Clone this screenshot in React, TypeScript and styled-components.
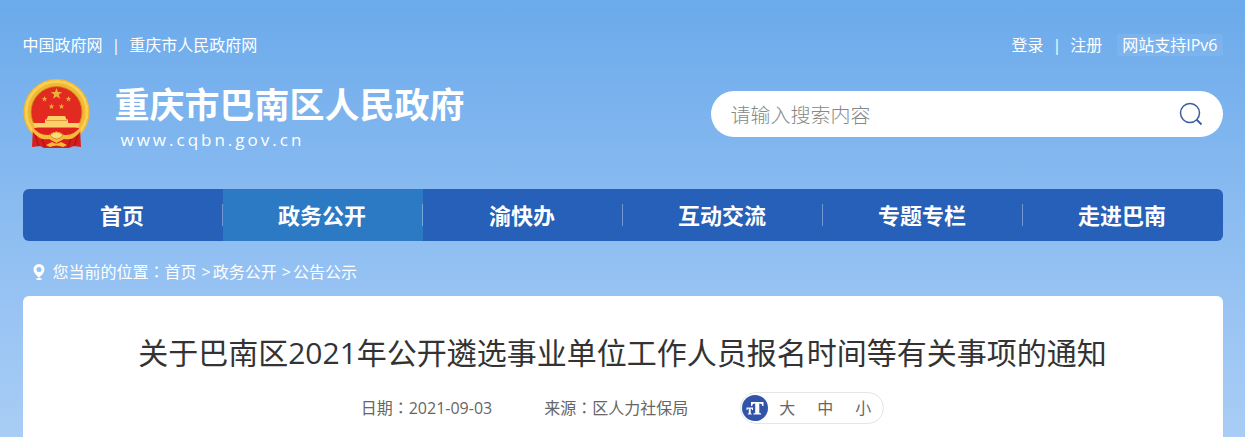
import React from 'react';
import styled, { createGlobalStyle } from 'styled-components';

const sans = `'Open Sans', 'Noto Sans CJK SC', sans-serif`;

const GlobalStyle = createGlobalStyle`
  *, *::before, *::after { box-sizing: border-box; }
  body {
    margin: 0;
    font-family: ${sans};
    font-size: 16px;
    line-height: 24px;
    color: #fff;
  }
  a { color: inherit; text-decoration: none; }
  h1, p, ul, ol { margin: 0; padding: 0; list-style: none; }
  button, input { font: inherit; }
`;

const Page = styled.div`
  display: flex;
  flex-direction: column;
  min-height: 100vh;
  background: linear-gradient(#6baaeb 0px, #92c0f2 260px, #a9cdf5 437px);
`;

const Container = styled.div`
  width: calc(100% - 44px);
  max-width: 1200px;
  margin: 0 auto;
`;

const TopBar = styled(Container)`
  display: flex;
  justify-content: space-between;
  padding-top: 33px;
`;

const LinkGroup = styled.div`
  display: flex;
  align-items: center;
`;

const Divider = styled.span`
  margin: 0 9px;
`;

const Badge = styled.a`
  margin-left: 15px;
  padding: 0 5px;
  line-height: 22px;
  border-radius: 2px;
  background: rgba(255, 255, 255, 0.07);
`;

const Header = styled(Container)`
  display: flex;
  align-items: center;
  justify-content: space-between;
  padding: 20px 0 38px;
`;

const Brand = styled.a`
  display: flex;
  align-items: center;
  gap: 25px;
`;

const BrandText = styled.div`
  display: flex;
  flex-direction: column;
  padding: 3px 0 1px;
`;

const BrandName = styled.span`
  font-size: 35px;
  font-weight: 700;
  line-height: 50px;
`;

const BrandUrl = styled.span`
  padding-left: 6px;
  font-size: 17px;
  line-height: 20px;
  letter-spacing: 3px;
`;

const Search = styled.form`
  display: flex;
  align-items: center;
  width: 512px;
  height: 46px;
  padding: 0 20px;
  border-radius: 23px;
  background: #fff;
`;

const SearchInput = styled.input`
  flex: 1;
  min-width: 0;
  padding: 3px 0 0;
  border: 0;
  outline: 0;
  background: transparent;
  font-size: 20px;
  line-height: 30px;
  font-weight: 300;
  color: #333;
  &::placeholder { color: #888; opacity: 1; }
`;

const SearchButton = styled.button`
  display: flex;
  padding: 0;
  border: 0;
  background: none;
  cursor: pointer;
`;

const Nav = styled(Container).attrs({ as: 'nav' })`
  display: flex;
  overflow: hidden;
  border-radius: 6px;
  background: #2660b8;
`;

const NavItem = styled.a<{ $active?: boolean }>`
  display: flex;
  flex: 1;
  align-items: center;
  height: 52px;
  background: ${(p) => (p.$active ? '#2c79c4' : 'transparent')};
  font-size: 22px;
  font-weight: 700;
  line-height: 22px;
`;

const NavLabel = styled.span`
  flex: 1;
  text-align: center;
  border-right: 1px solid rgba(255, 255, 255, 0.35);
  ${NavItem}:last-child & { border-color: transparent; }
`;

const Breadcrumb = styled(Container)`
  display: flex;
  align-items: center;
  padding: 18px 0 12px 10px;
`;

const PinSlot = styled.span`
  display: flex;
  margin-right: 8px;
`;

const Colon = styled.span.attrs({ lang: 'zh-Hant', children: '：' })`
  font-family: 'Noto Sans CJK TC', sans-serif;
`;

const Arrow = styled.span`
  margin: 0 2px 0 5px;
`;

const Article = styled(Container).attrs({ as: 'main' })`
  flex: 1;
  padding: 34px 20px 13px;
  border-radius: 6px 6px 0 0;
  background: #fff;
  color: #666;
`;

const Title = styled.h1`
  font-size: 30px;
  font-weight: 400;
  line-height: 46px;
  text-align: center;
  color: #333;
`;

const Meta = styled.div`
  display: flex;
  align-items: center;
  justify-content: center;
  gap: 52px;
  margin-top: 16px;
`;

const MetaItem = styled.span`
  padding-bottom: 2px;
  line-height: 22px;
`;

const SizePicker = styled.div`
  display: flex;
  align-items: center;
  height: 32px;
  padding: 0 12px 0 1px;
  border: 1px solid #e2e5ea;
  border-radius: 16px;
`;

const SizeButtons = styled.div`
  display: flex;
  gap: 22px;
  margin-left: 11px;
`;

const SizeButton = styled.button`
  padding: 0;
  border: 0;
  background: none;
  color: #666;
  cursor: pointer;
`;

const star = (cx: number, cy: number, r: number) =>
  Array.from({ length: 10 }, (_, i) => {
    const a = (Math.PI / 5) * i - Math.PI / 2;
    const k = i % 2 ? r * 0.4 : r;
    return `${(cx + k * Math.cos(a)).toFixed(2)},${(cy + k * Math.sin(a)).toFixed(2)}`;
  }).join(' ');

const Emblem = () => (
  <svg width="67" height="70" viewBox="0 0 67 70" aria-hidden="true">
    <circle cx="33.5" cy="33" r="29" fill="none" stroke="#f1b832" strokeWidth="8" />
    <circle cx="33.5" cy="33" r="30.5" fill="none" stroke="#f9cf58" strokeWidth="3" />
    <circle cx="33.5" cy="33" r="32" fill="none" stroke="#f1b832" strokeWidth="1" strokeDasharray="4 3" />
    <path d="M10 49 L9 68 L17 67 L21 69 L46 69 L51 67 L58 68 L57 49 Z" fill="#d81e1c" />
    <path d="M12 56 L16 67 M55 56 L51 67 M19 60 L22 68 M48 60 L45 68" stroke="#a91413" strokeWidth="1.2" />
    <circle cx="33.5" cy="33" r="25.5" fill="#e22a20" stroke="#cf8a1c" strokeWidth="1" />
    <g fill="#eeb03a">
      <polygon points={star(33.5, 15, 6)} />
      <polygon points={star(21.5, 20, 3)} />
      <polygon points={star(45.5, 20, 3)} />
      <polygon points={star(28.5, 27.5, 3)} />
      <polygon points={star(38.5, 27.5, 3)} />
    </g>
    <path d="M25 37h17l1.5 3.5H45V44h12l-2 4.5H12L10 44h12v-3.5h1.5z" fill="#fcd36a" />
    <path d="M23 41.5h21" stroke="#e59a3a" />
    <path d="M10 49h47l-4 6-11 2-8.500-5-8.500 5-11-2z" fill="#de211d" />
    <path d="M9 47 Q16 57 26 56 Q33.500 49 41 56 Q51 57 58 47 L57 53 Q50 62 41 60 L33.500 64 L26 60 Q17 62 10 53Z" fill="#f4bd38" />
    <path d="M27 56q6.500-6 13 0l-3 3q-3.500 2-7 0z" fill="#fbdc78" stroke="#d8791f" strokeWidth="0.8" />
    <path d="M23 66l6-3q4.500 3 9 0l6 3-4 2q-6.500-3-13 0z" fill="#f4bd38" />
  </svg>
);

const SearchIcon = () => (
  <svg width="24" height="24" viewBox="0 0 24 24" fill="none" stroke="#3f5c9e" strokeWidth="1.5" aria-hidden="true">
    <circle cx="11" cy="11" r="9.5" />
    <path d="M17.500 17.500 L22.500 22.500" strokeWidth="1.8" />
  </svg>
);

const PinIcon = () => (
  <svg width="12" height="16" viewBox="0 0 12 16" fill="#fff" aria-hidden="true">
    <path fillRule="evenodd" d="M6 0a5.500 5.500 0 0 1 5.500 5.500C11.500 9 8 11.500 6 14 4 11.500.5 9 .5 5.500A5.500 5.500 0 0 1 6 0zm0 3a2.500 2.500 0 1 0 0 5 2.500 2.500 0 0 0 0-5z" />
    <ellipse cx="6" cy="15" rx="3" ry="1" />
  </svg>
);

const FontSizeIcon = () => (
  <svg width="26" height="26" viewBox="0 0 26 26" aria-hidden="true">
    <circle cx="13" cy="13" r="13" fill="#3153a8" />
    <path d="M9 7h12.500v4h-1.200c-.2-1.700-.8-2.500-3-2.500V18l1.800.5v1h-7.700v-1l1.800-.5V8.500c-2.200 0-2.800.8-3 2.500H9z" fill="#fff" />
    <path d="M4.500 12.500H11v2.400h-.9c-.1-.8-.5-1.100-1.400-1.100v4.500l1 .4v.8H5.800v-.8l1-.4v-4.500c-.9 0-1.300.3-1.400 1.100h-.9z" fill="#fff" />
  </svg>
);

const navItems = ['首页', '政务公开', '渝快办', '互动交流', '专题专栏', '走进巴南'];

export default function App() {
  return (
    <Page lang="zh-CN">
      <GlobalStyle />
      <TopBar>
        <LinkGroup>
          <a href="#">中国政府网</a>
          <Divider>|</Divider>
          <a href="#">重庆市人民政府网</a>
        </LinkGroup>
        <LinkGroup>
          <a href="#">登录</a>
          <Divider>|</Divider>
          <a href="#">注册</a>
          <Badge href="#">网站支持IPv6</Badge>
        </LinkGroup>
      </TopBar>
      <Header>
        <Brand href="#">
          <Emblem />
          <BrandText>
            <BrandName>重庆市巴南区人民政府</BrandName>
            <BrandUrl>www.cqbn.gov.cn</BrandUrl>
          </BrandText>
        </Brand>
        <Search onSubmit={(e) => e.preventDefault()}>
          <SearchInput type="text" placeholder="请输入搜索内容" aria-label="请输入搜索内容" />
          <SearchButton type="submit" aria-label="搜索">
            <SearchIcon />
          </SearchButton>
        </Search>
      </Header>
      <Nav>
        {navItems.map((label) => (
          <NavItem key={label} href="#" $active={label === '政务公开'}>
            <NavLabel>{label}</NavLabel>
          </NavItem>
        ))}
      </Nav>
      <Breadcrumb>
        <PinSlot>
          <PinIcon />
        </PinSlot>
        <span>您当前的位置<Colon /></span>
        <a href="#">首页</a>
        <Arrow>&gt;</Arrow>
        <a href="#">政务公开</a>
        <Arrow>&gt;</Arrow>
        <a href="#">公告公示</a>
      </Breadcrumb>
      <Article>
        <Title>关于巴南区2021年公开遴选事业单位工作人员报名时间等有关事项的通知</Title>
        <Meta>
          <MetaItem>日期<Colon />2021-09-03</MetaItem>
          <MetaItem>来源<Colon />区人力社保局</MetaItem>
          <SizePicker>
            <FontSizeIcon />
            <SizeButtons>
              <SizeButton type="button">大</SizeButton>
              <SizeButton type="button">中</SizeButton>
              <SizeButton type="button">小</SizeButton>
            </SizeButtons>
          </SizePicker>
        </Meta>
      </Article>
    </Page>
  );
}
